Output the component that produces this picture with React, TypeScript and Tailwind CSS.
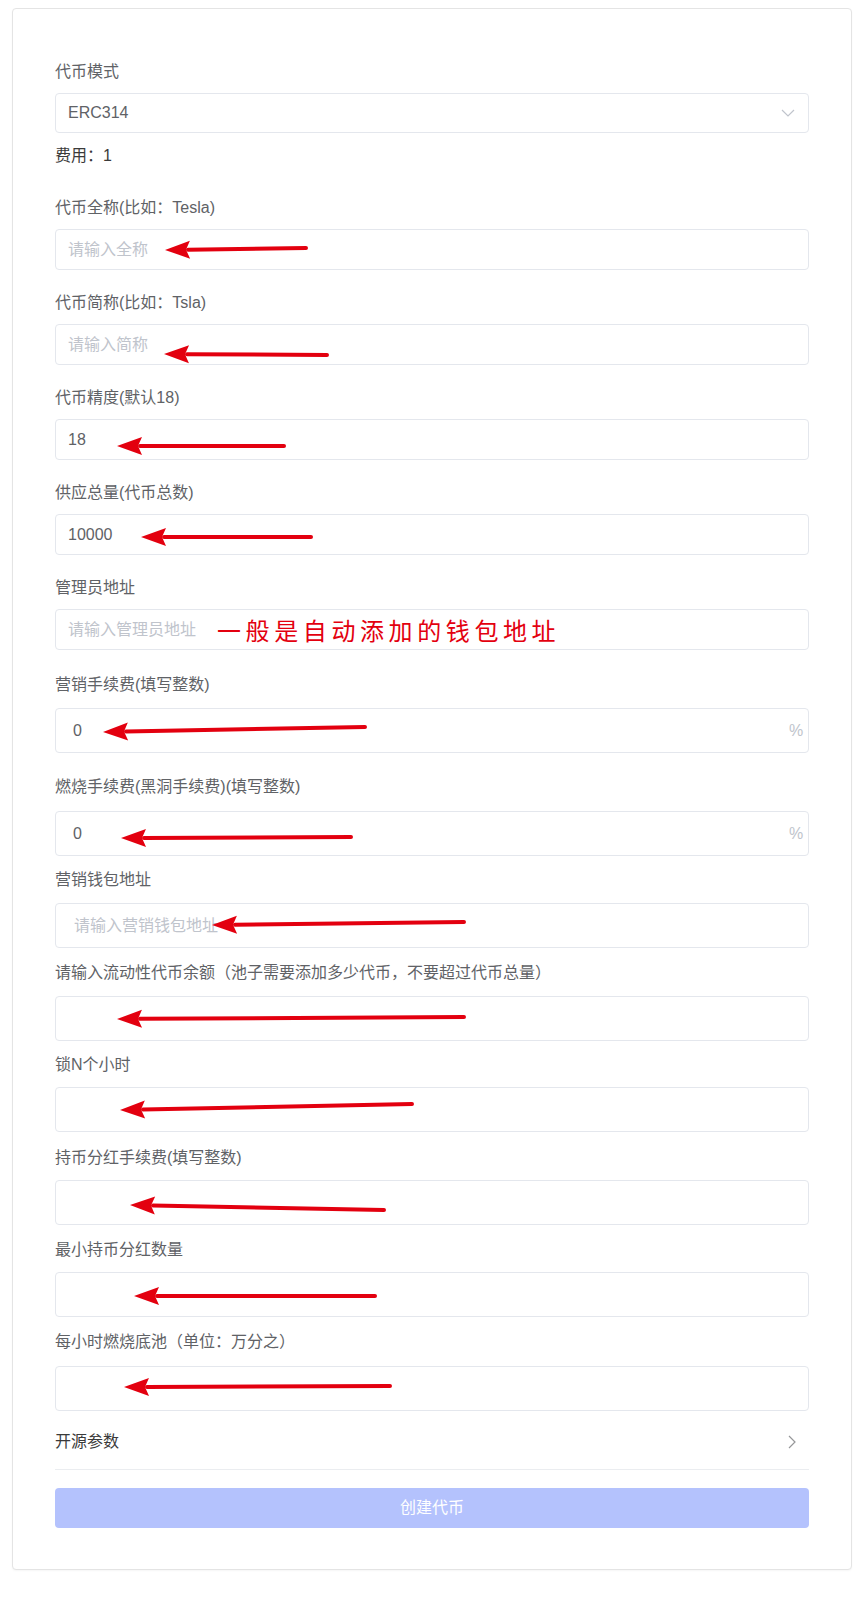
import React from "react";

const font = '"Liberation Sans", "Noto Sans CJK SC", sans-serif';

type ArrowSpec = { tip: [number, number]; tail: [number, number] };

// annotation arrows, page coordinates
const arrows: ArrowSpec[] = [
  { tip: [165, 250], tail: [306, 248] },
  { tip: [164, 354], tail: [327, 355] },
  { tip: [117, 446], tail: [284, 446] },
  { tip: [141, 537], tail: [311, 537] },
  { tip: [103, 732], tail: [365, 727] },
  { tip: [121, 838], tail: [351, 837] },
  { tip: [212, 925], tail: [464, 922] },
  { tip: [117, 1019], tail: [464, 1017] },
  { tip: [120, 1110], tail: [412, 1104] },
  { tip: [130, 1205], tail: [384, 1210] },
  { tip: [134, 1296], tail: [375, 1296] },
  { tip: [124, 1387], tail: [390, 1386] },
];

function Arrow({ tip, tail }: ArrowSpec) {
  const [tx, ty] = tip;
  const [sx, sy] = tail;
  const dx = tx - sx;
  const dy = ty - sy;
  const len = Math.sqrt(dx * dx + dy * dy);
  const ux = dx / len;
  const uy = dy / len;
  const headLen = 25;
  const half = 9;
  const bx = tx - ux * headLen;
  const by = ty - uy * headLen;
  const px = -uy;
  const py = ux;
  const pts = `${tx},${ty} ${bx + px * half},${by + py * half} ${bx + ux * 4},${by + uy * 4} ${bx - px * half},${by - py * half}`;
  return (
    <g>
      <line x1={sx} y1={sy} x2={bx + ux * 2} y2={by + uy * 2} stroke="#e3000f" strokeWidth={4} strokeLinecap="round" />
      <polygon points={pts} fill="#e3000f" />
    </g>
  );
}

function Label({ text, className = "" }: { text: string; className?: string }) {
  return <div className={`h-[22px] text-[16px] leading-[24px] text-[#606266] ${className}`}>{text}</div>;
}

function TextInput({
  placeholder,
  value,
  className = "",
  tall = false,
  suffix,
  children,
}: {
  placeholder?: string;
  value?: string;
  className?: string;
  tall?: boolean;
  suffix?: string;
  children?: React.ReactNode;
}) {
  return (
    <div
      className={`flex items-center rounded-[4px] border border-[#e4e7ed] bg-white ${tall ? "h-[45px] pl-[17px] pr-[5px]" : "h-[41px] pl-[12px] pr-[12px]"} ${className}`}
    >
      <input
        readOnly
        placeholder={placeholder}
        defaultValue={value}
        style={{ fontFamily: font }}
        className={`${children ? "w-[130px]" : "flex-1"} min-w-0 bg-transparent text-[16px] text-[#606266] outline-none placeholder:text-[#c0c4cc]`}
      />
      {children}
      {suffix && <span className="w-[14px] text-center text-[16px] text-[#c0c4cc]">{suffix}</span>}
    </div>
  );
}

export default function App() {
  return (
    <div className="relative min-h-[1600px] w-full bg-white" style={{ fontFamily: font }}>
      <div className="pt-[8px] pl-[12px]">
        <div className="flex w-[840px] flex-col rounded-[4px] border border-[#e4e4e4] bg-white px-[42px] pt-[51px] pb-[41px] shadow-[0_1px_2px_rgba(0,0,0,0.04)]">
          <Label text="代币模式" />
          <div className="mt-[11px] flex h-[40px] items-center justify-between rounded-[4px] border border-[#e4e7ed] pl-[12px] pr-[13px]">
            <span className="text-[16px] text-[#606266]">ERC314</span>
            <svg width="14" height="8" viewBox="0 0 14 8" fill="none">
              <path d="M1 1l6 6 6-6" stroke="#c0c4cc" strokeWidth="1.2" />
            </svg>
          </div>
          <div className="mt-[11px] h-[22px] text-[16px] leading-[24px] text-[#3a3a3a]">费用：1</div>

          <Label text="代币全称(比如：Tesla)" className="mt-[30px]" />
          <TextInput placeholder="请输入全称" className="mt-[11px]" />

          <Label text="代币简称(比如：Tsla)" className="mt-[21px]" />
          <TextInput placeholder="请输入简称" className="mt-[11px]" />

          <Label text="代币精度(默认18)" className="mt-[21px]" />
          <TextInput value="18" className="mt-[11px]" />

          <Label text="供应总量(代币总数)" className="mt-[21px]" />
          <TextInput value="10000" className="mt-[11px]" />

          <Label text="管理员地址" className="mt-[21px]" />
          <TextInput placeholder="请输入管理员地址" className="mt-[11px]">
            <span
              className="ml-[19px] text-[24px] leading-none tracking-[4.6px] text-[#e3000f]"
              style={{ fontFamily: '"Noto Sans CJK SC", sans-serif' }}
            >
              一般是自动添加的钱包地址
            </span>
          </TextInput>

          <Label text="营销手续费(填写整数)" className="mt-[23px]" />
          <TextInput value="0" tall suffix="%" className="mt-[13px]" />

          <Label text="燃烧手续费(黑洞手续费)(填写整数)" className="mt-[22px]" />
          <TextInput value="0" tall suffix="%" className="mt-[14px]" />

          <Label text="营销钱包地址" className="mt-[12px]" />
          <TextInput placeholder="请输入营销钱包地址" tall className="mt-[13px] !pl-[18px]" />

          <Label text="请输入流动性代币余额（池子需要添加多少代币，不要超过代币总量）" className="mt-[13px]" />
          <TextInput tall className="mt-[13px]" />

          <Label text="锁N个小时" className="mt-[12px]" />
          <TextInput tall className="mt-[12px]" />

          <Label text="持币分红手续费(填写整数)" className="mt-[14px]" />
          <TextInput tall className="mt-[12px]" />

          <Label text="最小持币分红数量" className="mt-[13px]" />
          <TextInput tall className="mt-[12px]" />

          <Label text="每小时燃烧底池（单位：万分之）" className="mt-[13px]" />
          <TextInput tall className="mt-[14px]" />

          <div className="flex h-[59px] items-center justify-between border-b border-[#ebedf0] pt-[3px]">
            <span className="text-[16px] text-[#3a3a3a]">开源参数</span>
            <svg width="8" height="14" viewBox="0 0 8 14" fill="none" className="mr-[13px]">
              <path d="M1 1l6 6-6 6" stroke="#969799" strokeWidth="1.2" />
            </svg>
          </div>

          <button className="mt-[18px] h-[40px] rounded-[4px] bg-[#b4c2fd] text-[16px] text-white">创建代币</button>
        </div>
      </div>

      <svg className="pointer-events-none absolute top-0 left-0" width="865" height="1600">
        {arrows.map((a, i) => (
          <Arrow key={i} {...a} />
        ))}
      </svg>
    </div>
  );
}
